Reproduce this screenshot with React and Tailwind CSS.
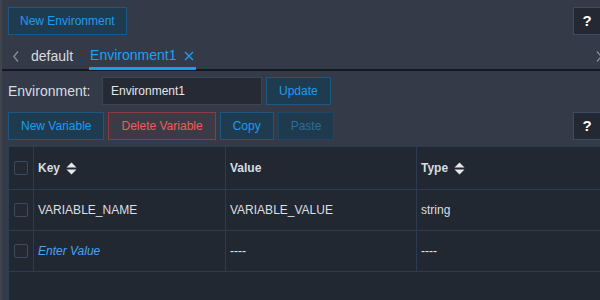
import React from "react";

const btn =
  "h-[28px] px-3 border text-[12px] leading-none flex items-center";

function SortIcon() {
  return (
    <svg width="11" height="13" viewBox="0 0 11 13" className="ml-[6px]">
      <path d="M5.5 0.5 L10.5 5.5 L0.5 5.5 Z" fill="#e6e8ec" />
      <path d="M0.5 7.5 L10.5 7.5 L5.5 12.5 Z" fill="#e6e8ec" />
    </svg>
  );
}

function Chevron({ dir }) {
  return (
    <svg width="6" height="11" viewBox="0 0 6 11">
      <path
        d={dir === "left" ? "M5 0.5 L0.8 5.5 L5 10.5" : "M1 0.5 L5.2 5.5 L1 10.5"}
        fill="none"
        stroke="#8c919a"
        strokeWidth="1.2"
      />
    </svg>
  );
}

function Check() {
  return (
    <div className="w-[14px] h-[14px] border border-[#3e4b5f] rounded-[2px] bg-[#232833]" />
  );
}

function HelpButton() {
  return (
    <button className="w-[28px] h-[28px] ml-auto -mr-[1px] bg-[#232833] border border-[#3b4d66] text-white font-bold text-[15px] flex items-center justify-center">
      ?
    </button>
  );
}

export default function App() {
  const rows = [
    { key: "VARIABLE_NAME", value: "VARIABLE_VALUE", type: "string" },
  ];

  return (
    <div
      className="w-[600px] h-[300px] overflow-hidden bg-[#343a47] text-[#d6d9de] border-l-2 border-[#41444a]"
      style={{ fontFamily: "'Liberation Sans', Arial, sans-serif" }}
    >
      {/* TOP BAR */}
      <div className="flex items-center pt-[7px] pl-[6px]">
        <button className={`${btn} px-[11px] bg-[#1f3b50] border-[#1c5883] text-[#1d9bf0]`}>
          New Environment
        </button>
        <HelpButton />
      </div>

      {/* TABS */}
      <div className="mt-[8px] h-[28px] flex items-center border-b-2 border-[#15191f]">
        <span className="ml-[11px]">
          <Chevron dir="left" />
        </span>
        <span className="ml-[12px] text-[14px] text-[#d9dce1] h-full flex items-center">
          default
        </span>
        <span className="ml-[16px] h-full flex items-center text-[14px] text-[#1da1f2] border-b-[3px] border-[#12a0ef] -mb-[2px] pr-[2px] pl-[1px]">
          Environment1
          <svg width="10" height="10" viewBox="0 0 10 10" className="ml-[8px]">
            <path d="M1 1 L9 9 M9 1 L1 9" stroke="#1da1f2" strokeWidth="1.3" />
          </svg>
        </span>
        <span className="ml-auto -mr-[2px]">
          <Chevron dir="right" />
        </span>
      </div>

      {/* ENVIRONMENT NAME */}
      <div className="flex items-center mt-[6px] pl-[6px]">
        <span className="text-[14px] text-[#d9dce1] w-[94px]">Environment:</span>
        <div className="w-[160px] h-[28px] bg-[#252a35] border border-[#3b4556] flex items-center px-[8px] text-[12px] text-[#e4e6ea]">
          Environment1
        </div>
        <button className={`${btn} ml-[4px] bg-[#1f3b50] border-[#1c5883] text-[#1d9bf0]`}>
          Update
        </button>
      </div>

      {/* ACTIONS */}
      <div className="flex items-center gap-[4px] mt-[7px] pl-[6px]">
        <button className={`${btn} bg-[#1f3b50] border-[#1c5883] text-[#1d9bf0]`}>
          New Variable
        </button>
        <button className={`${btn} bg-[#3c3a45] border-[#8c3b40] text-[#ef5d5d]`}>
          Delete Variable
        </button>
        <button className={`${btn} bg-[#1f3b50] border-[#1c5883] text-[#1d9bf0]`}>
          Copy
        </button>
        <button className={`${btn} bg-[#1f3a4f] border-[#1b4868] text-[#2c6d99]`}>
          Paste
        </button>
        <HelpButton />
      </div>

      {/* TABLE */}
      <div className="mt-[6px] ml-[6px] h-[200px] bg-[#222832] border-t border-l border-[#2b3b52] text-[12px]">
        <div className="flex h-[43px] border-b border-[#2b3b52] font-bold text-[#d9dce1]">
          <div className="w-[25px] flex items-center justify-center border-r border-[#2b3b52]">
            <Check />
          </div>
          <div className="w-[192px] flex items-center pl-[4px] border-r border-[#2b3b52]">
            Key <SortIcon />
          </div>
          <div className="w-[191px] flex items-center pl-[4px] border-r border-[#2b3b52]">
            Value
          </div>
          <div className="flex-1 flex items-center pl-[4px]">
            Type <SortIcon />
          </div>
        </div>

        {rows.map((r) => (
          <div key={r.key} className="flex h-[41px] border-b border-[#2b3b52] text-[#dcdfe3]">
            <div className="w-[25px] flex items-center justify-center border-r border-[#2b3b52]">
              <Check />
            </div>
            <div className="w-[192px] flex items-center pl-[4px] border-r border-[#2b3b52]">
              {r.key}
            </div>
            <div className="w-[191px] flex items-center pl-[4px] border-r border-[#2b3b52]">
              {r.value}
            </div>
            <div className="flex-1 flex items-center pl-[4px]">{r.type}</div>
          </div>
        ))}

        <div className="flex h-[41px] border-b border-[#2b3b52] text-[#e6e8ec]">
          <div className="w-[25px] flex items-center justify-center border-r border-[#2b3b52]">
            <Check />
          </div>
          <div className="w-[192px] flex items-center pl-[4px] border-r border-[#2b3b52] italic text-[#4ba3f5]">
            Enter Value
          </div>
          <div className="w-[191px] flex items-center pl-[4px] border-r border-[#2b3b52]">
            ----
          </div>
          <div className="flex-1 flex items-center pl-[4px]">----</div>
        </div>
      </div>
    </div>
  );
}
